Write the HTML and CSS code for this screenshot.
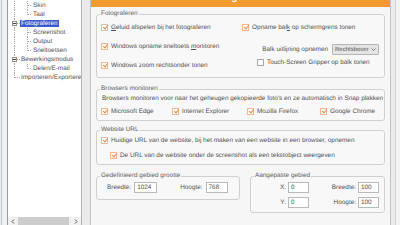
FILE: index.html
```html
<!DOCTYPE html>
<html lang="nl">
<head>
<meta charset="utf-8">
<title>Instellingen - Fotograferen</title>
<link rel="stylesheet" href="styles.css">
</head>
<body>
<div class="window">
  <div class="edge"></div>
  <div class="tree-pane">
    <ul class="tree">
      <li class="row"><span class="g1 v"></span><span class="g2 t"></span><span class="lbl">Skin</span></li>
      <li class="row"><span class="g1 v"></span><span class="g2 l"></span><span class="lbl">Taal</span></li>
      <li class="row"><span class="g1 exp"><span class="box"></span></span><span class="lbl sel">Fotograferen</span></li>
      <li class="row"><span class="g1 v"></span><span class="g2 t"></span><span class="lbl">Screenshot</span></li>
      <li class="row"><span class="g1 v"></span><span class="g2 t"></span><span class="lbl">Output</span></li>
      <li class="row"><span class="g1 v"></span><span class="g2 l"></span><span class="lbl">Sneltoetsen</span></li>
      <li class="row"><span class="g1 exp"><span class="box"></span></span><span class="lbl">Bewerkingsmodus</span></li>
      <li class="row"><span class="g1 v"></span><span class="g2 l"></span><span class="lbl">Delen/E-mail</span></li>
      <li class="row"><span class="g1 l"></span><span class="lbl">Importeren/Exporteren</span></li>
    </ul>
    <div class="hscroll">
      <span class="arrow"><svg width="4" height="5" viewBox="0 0 4 5"><polyline points="3,0.5 1,2.5 3,4.5" fill="none" stroke="#555" stroke-width="1"/></svg></span>
      <span class="track"><span class="thumb"></span></span>
      <span class="arrow"><svg width="4" height="5" viewBox="0 0 4 5"><polyline points="1,0.5 3,2.5 1,4.5" fill="none" stroke="#555" stroke-width="1"/></svg></span>
    </div>
  </div>
  <div class="main">
    <div class="header"><span class="title">Fotograferen</span></div>
    <div class="content">
      <fieldset class="fs fs1">
        <legend>Fotograferen</legend>
        <div class="body body1">
          <div class="col-left">
            <div class="opt"><span class="cb on"></span><span><u>G</u>eluid afspelen bij het fotograferen</span></div>
            <div class="opt"><span class="cb on"></span><span>Windows opname sneltoets <u>m</u>onitoren</span></div>
            <div class="opt"><span class="cb on"></span><span>Windows zoom rechtsonder tonen</span></div>
          </div>
          <div class="col-right">
            <div class="opt"><span class="cb on"></span><span>Opname bal<u>k</u> op schermgrens tonen</span></div>
            <div class="align-row"><span>Balk uitlijning opnemen</span>
              <span class="select"><span>Rechtsbover</span><svg width="5" height="3" viewBox="0 0 5 3"><polyline points="0.5,0.5 2.5,2.5 4.5,0.5" fill="none" stroke="#666" stroke-width="0.8"/></svg></span>
            </div>
            <div class="opt touch"><span class="cb"></span><span>Touch-Screen Gripper op balk tonen</span></div>
          </div>
        </div>
      </fieldset>
      <fieldset class="fs fs2">
        <legend>Browsers monitoren</legend>
        <div class="body body2">
          <div class="desc">Browsers monitoren voor naar het geheugen gekopieerde foto's en ze automatisch in Snap plakken</div>
          <div class="browsers">
            <div class="opt"><span class="cb on"></span><span>Microsoft Edge</span></div>
            <div class="opt"><span class="cb on"></span><span>Internet Explorer</span></div>
            <div class="opt"><span class="cb on"></span><span>Mozilla Firefox</span></div>
            <div class="opt"><span class="cb on"></span><span>Google Chrome</span></div>
          </div>
        </div>
      </fieldset>
      <fieldset class="fs fs3">
        <legend>Website URL</legend>
        <div class="body body3">
          <div class="opt"><span class="cb on"></span><span>Huidige URL van de website, bij het maken van een website in een browser, opnemen</span></div>
          <div class="opt sub"><span class="cb on"></span><span>De URL van de website onder de screenshot als een tekstobject weergeven</span></div>
        </div>
      </fieldset>
      <div class="bottom-row">
        <fieldset class="fs fs4">
          <legend>Gedefinieerd gebied grootte</legend>
          <div class="body body4">
            <span>Breedte:</span><span class="field">1024</span>
            <span class="lbl2">Hoogte:</span><span class="field f2">768</span>
          </div>
        </fieldset>
        <fieldset class="fs fs5">
          <legend>Aangepaste gebied</legend>
          <div class="body body5">
            <span class="rl">X:</span><span class="field">0</span>
            <span class="rl">Breedte:</span><span class="field">100</span>
            <span class="rl">Y:</span><span class="field">0</span>
            <span class="rl">Hoogte:</span><span class="field">100</span>
          </div>
        </fieldset>
      </div>
    </div>
  </div>
  <div class="rside"><div class="rside-inner"></div></div>
</div>
</body>
</html>
```

FILE: styles.css
```css
html, body {
  margin: 0;
  padding: 0;
}
body {
  width: 400px;
  height: 225px;
  overflow: hidden;
  background: #ebebeb;
  font-family: "Liberation Sans", Arial, sans-serif;
  font-size: 6.4px;
  color: #505050;
  text-rendering: geometricPrecision;
}
.window {
  display: flex;
  width: 400px;
  height: 225px;
}
.edge {
  width: 6px;
  flex: none;
  background: #eef0f3;
  border-left: 1px solid #b9c8dc;
  box-sizing: border-box;
  margin-left: 1px;
}
.tree-pane {
  width: 75px;
  flex: none;
  box-sizing: border-box;
  border-left: 1px solid #9c9c9c;
  border-right: 1px solid #b4b4b4;
  background: #fff;
  display: flex;
  flex-direction: column;
  overflow: hidden;
}
.tree {
  list-style: none;
  margin: 0;
  padding: 1px 0 0;
  flex: 1;
}
.row {
  display: flex;
  align-items: center;
  height: 9px;
  white-space: nowrap;
}
.g1, .g2 {
  flex: none;
  height: 9px;
  display: flex;
  align-items: center;
  background-repeat: no-repeat;
}
.g1 { width: 12px; }
.g2 { width: 12px; }
.g1.v {
  background-image: repeating-linear-gradient(to bottom, #a6a6a6 0 1px, transparent 1px 2px);
  background-size: 1px 9px;
  background-position: 6px 0;
}
.g1.exp {
  background-image:
    repeating-linear-gradient(to bottom, #a6a6a6 0 1px, transparent 1px 2px),
    repeating-linear-gradient(to right, #a6a6a6 0 1px, transparent 1px 2px);
  background-size: 1px 9px, 3px 1px;
  background-position: 6px 0, 9px 4px;
}
.g1.l {
  background-image:
    repeating-linear-gradient(to bottom, #a6a6a6 0 1px, transparent 1px 2px),
    repeating-linear-gradient(to right, #a6a6a6 0 1px, transparent 1px 2px);
  background-size: 1px 5px, 5px 1px;
  background-position: 6px 0, 7px 4px;
}
.g2.t {
  background-image:
    repeating-linear-gradient(to bottom, #a6a6a6 0 1px, transparent 1px 2px),
    repeating-linear-gradient(to right, #a6a6a6 0 1px, transparent 1px 2px);
  background-size: 1px 9px, 4px 1px;
  background-position: 7px 0, 8px 4px;
}
.g2.l {
  background-image:
    repeating-linear-gradient(to bottom, #a6a6a6 0 1px, transparent 1px 2px),
    repeating-linear-gradient(to right, #a6a6a6 0 1px, transparent 1px 2px);
  background-size: 1px 5px, 4px 1px;
  background-position: 7px 0, 8px 4px;
}
.box {
  width: 5px;
  height: 5px;
  box-sizing: border-box;
  margin-left: 4px;
  border: 1px solid #8e8e8e;
  background: #fff linear-gradient(#444, #444) no-repeat center / 3px 1px;
}
.lbl {
  line-height: 7px;
  height: 7px;
  padding: 0 1px;
  color: #505050;
}
.lbl.sel {
  background: #3b5ccc;
  color: #fff;
}
.hscroll {
  flex: none;
  height: 8px;
  display: flex;
  background: #f0f0f0;
}
.arrow {
  width: 10px;
  flex: none;
  display: flex;
  align-items: center;
  justify-content: center;
}
.track {
  flex: 1;
  display: flex;
}
.thumb {
  width: 51px;
  background: #cdcdcd;
}
.main {
  width: 301px;
  flex: none;
  margin-left: 8px;
  box-sizing: border-box;
  border-left: 1px solid #c3c3c3;
  border-right: 1px solid #c3c3c3;
  background: #f6f6f6;
}
.header {
  height: 7px;
  overflow: hidden;
  background: #f39b2f;
  text-align: center;
}
.title {
  display: block;
  margin-top: -7px;
  font-size: 10px;
  line-height: 10px;
  font-weight: bold;
  color: #fff;
}
.content {
  padding: 0 5px;
}
.fs {
  margin: 0;
  padding: 0;
  border: 1px solid #d0d0d0;
  border-radius: 3px;
  min-width: 0;
  background: #f8f8f8;
}
.fs legend {
  margin-left: 3px;
  padding: 0 1px;
  line-height: 8px;
  font-size: 6.4px;
  color: #5e5e5e;
}
.fs1 { margin-top: 3px; }
.fs2 { margin-top: 7px; }
.fs3 { margin-top: 5px; }
.bottom-row {
  display: flex;
  gap: 10px;
  margin-top: 7px;
  align-items: flex-start;
}
.fs4 { width: 142px; flex: none; }
.fs5 { flex: 1; }
.body {
  box-sizing: border-box;
}
.opt {
  display: flex;
  align-items: center;
  gap: 3px;
  height: 7px;
  line-height: 7px;
  white-space: nowrap;
}
.cb {
  position: relative;
  flex: none;
  width: 7px;
  height: 7px;
  box-sizing: border-box;
  border: 1px solid #a9a9a9;
  background: #fff;
}
.cb.on {
  border-color: #f2b690;
}
.cb.on::after {
  content: "";
  position: absolute;
  left: 2px;
  top: -1px;
  width: 2px;
  height: 4px;
  border: solid #ee8a3e;
  border-width: 0 1px 1px 0;
  transform: rotate(40deg);
}
.body1 {
  display: flex;
  height: 59px;
  padding: 6px 0 0 4px;
}
.col-left {
  width: 141px;
  flex: none;
  display: flex;
  flex-direction: column;
  gap: 12px;
}
.col-right {
  flex: 1;
  display: flex;
  flex-direction: column;
}
.align-row {
  display: flex;
  align-items: center;
  justify-content: flex-end;
  gap: 4px;
  height: 11px;
  margin-top: 13px;
  padding-right: 5px;
  white-space: nowrap;
}
.select {
  width: 47px;
  height: 11px;
  box-sizing: border-box;
  border: 1px solid #b5b5b5;
  border-radius: 1px;
  background: #e4e4e4;
  display: flex;
  align-items: center;
  justify-content: space-between;
  padding: 0 2px 0 2px;
  font-size: 6px;
  color: #505050;
}
.touch {
  margin-top: 4px;
  padding-left: 15px;
}
.body2 {
  padding: 2px 0 5px 4px;
}
.desc {
  line-height: 8px;
  height: 8px;
  padding-left: 1px;
  white-space: nowrap;
}
.browsers {
  display: grid;
  grid-template-columns: 71px 75px 73px auto;
  margin-top: 4px;
  height: 8px;
  align-items: center;
}
.body3 {
  padding: 2px 0 5px 4px;
  display: flex;
  flex-direction: column;
  gap: 7px;
}
.body3 .opt { height: 8px; }
.sub { padding-left: 9px; }
.body4 {
  display: flex;
  align-items: center;
  padding: 2px 0 6px 10px;
  white-space: nowrap;
}
.field {
  width: 23px;
  height: 11px;
  box-sizing: border-box;
  border: 1px solid #bababa;
  background: #fff;
  padding-left: 2px;
  line-height: 9px;
  margin-left: 3px;
  color: #505050;
}
.body4 .f2 { width: 22px; }
.lbl2 { margin-left: 23px; }
.body5 {
  display: grid;
  grid-template-columns: 35px 21px 45px 21px;
  column-gap: 2px;
  row-gap: 4px;
  align-items: center;
  padding: 2px 0 4px 0;
}
.body5 .field {
  width: 21px;
  margin-left: 0;
}
.rl {
  text-align: right;
}
.rside {
  flex: 1;
  background: #ebebeb;
}
.rside-inner {
  margin-left: 4px;
  height: 100%;
  border-left: 1px solid #cfcfcf;
  background: #f3f3f3;
}
```
